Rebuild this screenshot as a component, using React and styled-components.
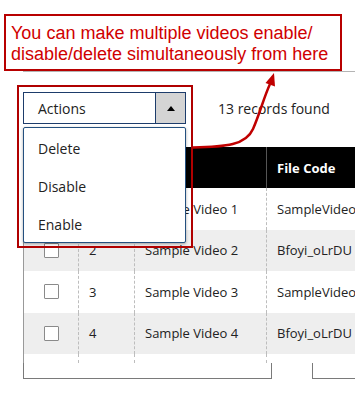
import React from "react";
import styled, { createGlobalStyle } from "styled-components";

const GlobalStyle = createGlobalStyle`
  html, body {
    margin: 0;
    padding: 0;
    background: #fff;
    overflow: hidden;
  }
  body {
    font-family: "Open Sans", "Liberation Sans", sans-serif;
    color: #222;
  }
`;

const rows = [
  { id: 1, name: "Sample Video 1", code: "SampleVideo_1280x720" },
  { id: 2, name: "Sample Video 2", code: "Bfoyi_oLrDU" },
  { id: 3, name: "Sample Video 3", code: "SampleVideo_1280x720" },
  { id: 4, name: "Sample Video 4", code: "Bfoyi_oLrDU" },
];

const actions = ["Delete", "Disable", "Enable"];

const App = () => {
  return (
    <Page>
      <GlobalStyle />
      <Panel>
        <Toolbar>
          <SelectWrap>
            <Select>
              <SelectLabel>Actions</SelectLabel>
              <SelectArrow>
                <Caret />
              </SelectArrow>
            </Select>
            <Menu>
              {actions.map((a) => (
                <MenuItem key={a}>{a}</MenuItem>
              ))}
            </Menu>
          </SelectWrap>
          <Records>13 records found</Records>
        </Toolbar>

        <Table>
          <HeadRow>
            <HeadCell />
            <HeadCell>#</HeadCell>
            <HeadCell>Name</HeadCell>
            <HeadCell>File Code</HeadCell>
          </HeadRow>
          {rows.map((r, i) => (
            <BodyRow key={r.id} $odd={i % 2 === 1}>
              <CheckCell>
                <Check />
              </CheckCell>
              <Cell>{r.id}</Cell>
              <Cell>{r.name}</Cell>
              <Cell>{r.code}</Cell>
            </BodyRow>
          ))}
          <FillerRow>
            <CheckCell />
            <Cell />
            <Cell />
            <Cell />
          </FillerRow>
        </Table>

        <Footer>
          <FooterBox />
          <FooterBoxRight />
        </Footer>
      </Panel>

      {/* annotation overlays */}
      <Note>
        You can make multiple videos enable/
        <br />
        disable/delete simultaneously from here
      </Note>
      <Highlight />
      <Arrow viewBox="0 0 355 410" width="355" height="410">
        <path
          d="M193,147.5 C226,147 246,145 253,129 S264,97 270,84"
          fill="none"
          stroke="#c00000"
          strokeWidth="2.5"
        />
        <polygon points="274,73 265.5,83 275,86.5" fill="#c00000" />
      </Arrow>
    </Page>
  );
};

const Page = styled.div`
  position: relative;
  width: 355px;
  height: 410px;
  padding-top: 71px;
  box-sizing: border-box;
  overflow: hidden;
`;

const Panel = styled.div`
  margin-left: 23px;
  border-top: 1px solid #b4b4b4;
  width: 600px;
`;

const Toolbar = styled.div`
  display: flex;
  align-items: flex-start;
  height: 75px;
  padding-top: 20px;
  box-sizing: border-box;
`;

const SelectWrap = styled.div`
  position: relative;
  width: 163px;
`;

const Select = styled.div`
  display: flex;
  height: 32px;
  border: 1px solid #1d3c6b;
  box-sizing: border-box;
  background: #fff;
`;

const SelectLabel = styled.div`
  flex: 1;
  display: flex;
  align-items: center;
  padding-left: 14px;
  font-size: 14px;
`;

const SelectArrow = styled.div`
  width: 29px;
  display: flex;
  align-items: center;
  justify-content: center;
  background: #d4d4d4;
  border-left: 1px solid #1d3c6b;
`;

const Caret = styled.span`
  width: 0;
  height: 0;
  border-left: 4px solid transparent;
  border-right: 4px solid transparent;
  border-bottom: 5px solid #000;
`;

const Menu = styled.div`
  position: absolute;
  top: 35px;
  left: 0;
  width: 163px;
  height: 116px;
  padding-top: 1px;
  box-sizing: border-box;
  background: #fff;
  border: 1px solid #24507f;
  border-radius: 2px;
  box-shadow: 0 1px 3px rgba(0, 0, 0, 0.35);
  z-index: 2;
`;

const MenuItem = styled.div`
  height: 38px;
  display: flex;
  align-items: center;
  padding-left: 14px;
  font-size: 14px;
`;

const Records = styled.div`
  margin-left: 32px;
  height: 32px;
  display: flex;
  align-items: center;
  font-size: 14px;
`;

const columns = "54px 56px 132px 260px";

const Table = styled.div`
  border-left: 1px solid #999;
`;

const HeadRow = styled.div`
  display: grid;
  grid-template-columns: ${columns};
  height: 41px;
  background: #000;
`;

const HeadCell = styled.div`
  display: flex;
  align-items: center;
  padding-left: 10px;
  color: #fff;
  font-weight: 700;
  font-size: 13px;
  & + & {
    border-left: 1px solid #555;
  }
`;

const BodyRow = styled.div`
  display: grid;
  grid-template-columns: ${columns};
  height: 41.5px;
  background: ${(p) => (p.$odd ? "#eeeeee" : "#fff")};
`;

const FillerRow = styled.div`
  display: grid;
  grid-template-columns: ${columns};
  height: 9px;
`;

const Cell = styled.div`
  display: flex;
  align-items: center;
  padding-left: 10px;
  font-size: 13px;
  color: #222;
  white-space: nowrap;
  border-left: 1px dashed #bdbdbd;
`;

const CheckCell = styled.div`
  display: flex;
  align-items: center;
  justify-content: center;
`;

const Check = styled.span`
  width: 15px;
  height: 15px;
  box-sizing: border-box;
  border: 1px solid #8a8a8a;
  border-radius: 1px;
  background: #fff;
`;

const Footer = styled.div`
  display: flex;
  height: 16px;
`;

const FooterBox = styled.div`
  width: 249px;
  box-sizing: border-box;
  border: 1px solid #7a7a7a;
  border-top: none;
`;

const FooterBoxRight = styled.div`
  margin-left: 40px;
  flex: 1;
  border-left: 1px solid #7a7a7a;
  border-bottom: 1px solid #7a7a7a;
`;

const Note = styled.div`
  position: absolute;
  left: 4px;
  top: 14px;
  width: 338px;
  height: 57px;
  box-sizing: border-box;
  border: 2px solid #b80000;
  background: #fff;
  padding: 7px 0 0 5px;
  font-family: "Liberation Sans", Arial, sans-serif;
  font-size: 18px;
  line-height: 21px;
  color: #d00000;
`;

const Highlight = styled.div`
  position: absolute;
  left: 17px;
  top: 85px;
  width: 176px;
  height: 163px;
  box-sizing: border-box;
  border: 2px solid #b00000;
  z-index: 3;
`;

const Arrow = styled.svg`
  position: absolute;
  left: 0;
  top: 0;
  pointer-events: none;
  z-index: 4;
`;

export default App;
